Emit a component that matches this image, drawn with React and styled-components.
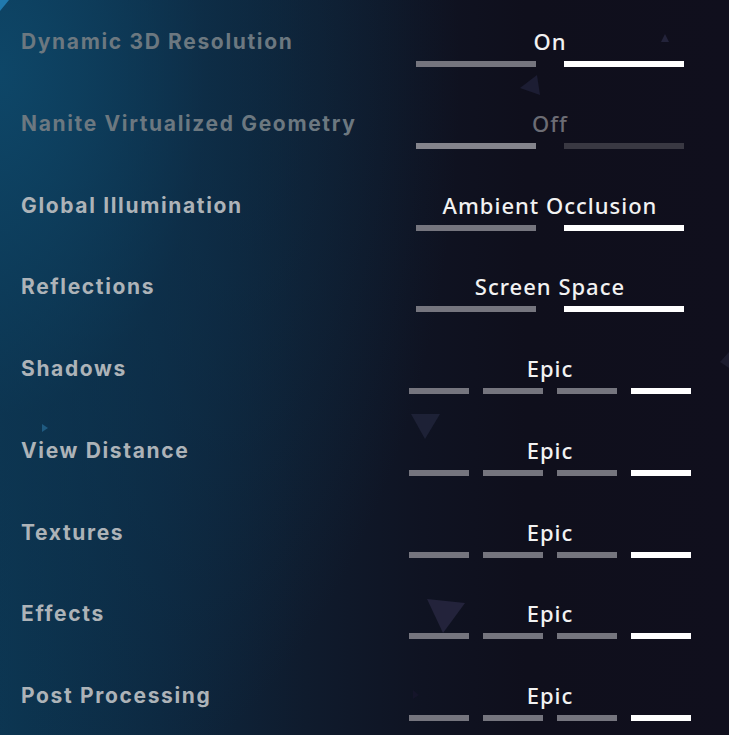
import React from "react";
import styled, { createGlobalStyle } from "styled-components";

const GlobalStyle = createGlobalStyle`
  html, body {
    margin: 0;
    padding: 0;
    background: #0f0f1c;
  }
`;

const Screen = styled.div`
  position: relative;
  width: 729px;
  height: 735px;
  overflow: hidden;
  background:
    radial-gradient(ellipse 460px 760px at 0% 10%, rgba(14, 72, 106, 0.9) 0%, rgba(13, 52, 80, 0.55) 45%, rgba(15, 15, 28, 0) 100%),
    linear-gradient(90deg, #0c3652 0%, #0d2840 22%, #0f1b2d 42%, #0f1322 58%, #0f0f1c 72%, #100f1d 100%);
`;

const Decor = styled.svg`
  position: absolute;
  inset: 0;
  width: 100%;
  height: 100%;
  pointer-events: none;
`;

const List = styled.div`
  position: relative;
  padding: 30px 38px 0 21px;
  display: flex;
  flex-direction: column;
`;

const Row = styled.div`
  height: 81.75px;
  display: flex;
  align-items: flex-start;
  justify-content: space-between;
`;

const Label = styled.div`
  font-family: Inter, "Liberation Sans", sans-serif;
  font-weight: 700;
  font-size: 21px;
  line-height: 24px;
  letter-spacing: 1.65px;
  color: ${(p) => (p.$disabled ? "#6c7880" : "#adb3b8")};
`;

const Control = styled.div`
  width: 282px;
  display: flex;
  flex-direction: column;
  align-items: center;
`;

const Value = styled.div`
  font-family: "Noto Sans", "Open Sans", sans-serif;
  font-weight: 500;
  font-size: 22px;
  line-height: 22px;
  letter-spacing: 1px;
  color: ${(p) => (p.$disabled ? "#6c6c74" : "#f2f2f2")};
`;

const Bars = styled.div`
  margin-top: 9px;
  display: flex;
  gap: ${(p) => (p.$count === 2 ? "28px" : "14px")};
`;

const Bar = styled.div`
  width: ${(p) => (p.$count === 2 ? "120px" : "60px")};
  height: 6px;
  background: ${(p) => p.$color};
`;

const rows = [
  { label: "Dynamic 3D Resolution", value: "On", options: 2, selected: 1, disabled: true },
  { label: "Nanite Virtualized Geometry", value: "Off", options: 2, selected: 0, disabled: true, off: true },
  { label: "Global Illumination", value: "Ambient Occlusion", options: 2, selected: 1 },
  { label: "Reflections", value: "Screen Space", options: 2, selected: 1 },
  { label: "Shadows", value: "Epic", options: 4, selected: 3 },
  { label: "View Distance", value: "Epic", options: 4, selected: 3 },
  { label: "Textures", value: "Epic", options: 4, selected: 3 },
  { label: "Effects", value: "Epic", options: 4, selected: 3 },
  { label: "Post Processing", value: "Epic", options: 4, selected: 3 },
];

function barColor(row, i) {
  if (row.off) return i === row.selected ? "#84848c" : "#393842";
  return i === row.selected ? "#ffffff" : "#75757e";
}

export default function App() {
  return (
    <>
      <GlobalStyle />
      <Screen>
        <Decor viewBox="0 0 729 735">
          <polygon points="0,0 9,0 0,11" fill="#2079ad" />
          <polygon points="661,42 669,42 665,34" fill="#23233a" />
          <polygon points="520,88 537,75 540,95" fill="#1c1d33" />
          <polygon points="411,414 440,414 425,439" fill="#1d2136" />
          <polygon points="427,599 465,603 443,633" fill="#23233b" />
          <polygon points="42,424 48,428 42,432" fill="#1f5a80" />
          <polygon points="729,352 720,362 729,368" fill="#1c1c2e" />
          <polygon points="413,690 419,695 413,699" fill="#15152a" />
        </Decor>
        <List>
          {rows.map((row) => (
            <Row key={row.label}>
              <Label $disabled={row.disabled}>{row.label}</Label>
              <Control>
                <Value $disabled={row.off}>{row.value}</Value>
                <Bars $count={row.options}>
                  {Array.from({ length: row.options }).map((_, i) => (
                    <Bar key={i} $count={row.options} $color={barColor(row, i)} />
                  ))}
                </Bars>
              </Control>
            </Row>
          ))}
        </List>
      </Screen>
    </>
  );
}
